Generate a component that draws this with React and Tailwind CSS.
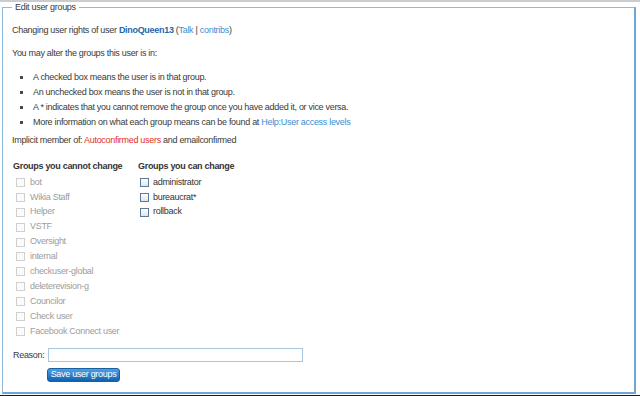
import React from "react";

const lockedGroups = [
  "bot",
  "Wikia Staff",
  "Helper",
  "VSTF",
  "Oversight",
  "internal",
  "checkuser-global",
  "deleterevision-g",
  "Councilor",
  "Check user",
  "Facebook Connect user",
];

const openGroups = ["administrator", "bureaucrat*", "rollback"];

const notes = [
  "A checked box means the user is in that group.",
  "An unchecked box means the user is not in that group.",
  "A * indicates that you cannot remove the group once you have added it, or vice versa.",
];

function Box({ locked }) {
  return locked ? (
    <span className="w-[9px] h-[9px] shrink-0 border border-[#cfcfcf] bg-[#fbfbfb]" />
  ) : (
    <span className="w-[9px] h-[9px] shrink-0 border border-[#5d7a98] bg-gradient-to-b from-[#ffffff] to-[#dfe5ec]" />
  );
}

export default function App() {
  return (
    <div className="w-[640px] h-[396px] bg-white overflow-hidden font-['Liberation_Sans',Arial,sans-serif] text-[9px] tracking-[-0.3px] text-[#3a3a3a]">
      <div className="h-[2px] bg-[#c9cdd1]" />

      <fieldset className="ml-[2px] w-[634px] h-[392px] border border-[#8dbbe0] border-r-2 border-b-2 border-r-[#6ea6d6] border-b-[#6ea6d6] px-[9px] pt-0 m-0">
        <legend className="px-[3px] leading-[11px]">Edit user groups</legend>

        {/* intro */}
        <p className="mt-[11px] leading-[12px]">
          Changing user rights of user{" "}
          <span className="font-bold text-[#1f67aa]">DinoQueen13</span>{" "}
          (<span className="text-[#3b8ed4]">Talk</span> |{" "}
          <span className="text-[#3b8ed4]">contribs</span>)
        </p>
        <p className="mt-[11px] leading-[12px]">You may alter the groups this user is in:</p>

        <ul className="mt-[11px]">
          {notes.map((n) => (
            <li key={n} className="flex items-center h-[15px]">
              <span className="ml-[8px] mr-[10px] w-[3px] h-[3px] bg-[#4a4a4a]" />
              {n}
            </li>
          ))}
          <li className="flex items-center h-[15px]">
            <span className="ml-[8px] mr-[10px] w-[3px] h-[3px] bg-[#4a4a4a]" />
            More information on what each group means can be found at&nbsp;
            <span className="text-[#3b8ed4]">Help:User access levels</span>
          </li>
        </ul>

        <p className="mt-[4px] leading-[12px]">
          Implicit member of: <span className="text-[#e3301b]">Autoconfirmed users</span> and
          emailconfirmed
        </p>

        {/* group columns */}
        <div className="mt-[14px] flex">
          <div className="w-[126px] pl-[1px]">
            <div className="font-bold leading-[12px] text-[#333]">Groups you cannot change</div>
            <div className="mt-[3px]">
              {lockedGroups.map((g) => (
                <div key={g} className="flex items-center h-[14.9px] pl-[3px] gap-[5px] text-[#9c9c9c]">
                  <Box locked />
                  {g}
                </div>
              ))}
            </div>
          </div>
          <div>
            <div className="font-bold leading-[12px] text-[#333]">Groups you can change</div>
            <div className="mt-[3px]">
              {openGroups.map((g) => (
                <div key={g} className="flex items-center h-[14.9px] pl-[2px] gap-[4px] text-[#333]">
                  <Box />
                  {g}
                </div>
              ))}
            </div>
          </div>
        </div>

        {/* reason + submit */}
        <div className="mt-[9.5px] flex items-center h-[14px]">
          <span className="w-[36px] pl-[1px]">Reason:</span>
          <span className="w-[255px] h-[14px] border border-[#a9c6df] bg-white" />
        </div>
        <button className="mt-[5.5px] ml-[35px] w-[73px] h-[14px] flex items-center justify-center rounded-[3px] border border-[#1b5f9e] bg-gradient-to-b from-[#4aa0e6] to-[#0d62b0] text-white leading-none">
          Save user groups
        </button>
      </fieldset>

      <div className="mt-[1px] h-[2px] bg-[#1c1c1c]" />
    </div>
  );
}
